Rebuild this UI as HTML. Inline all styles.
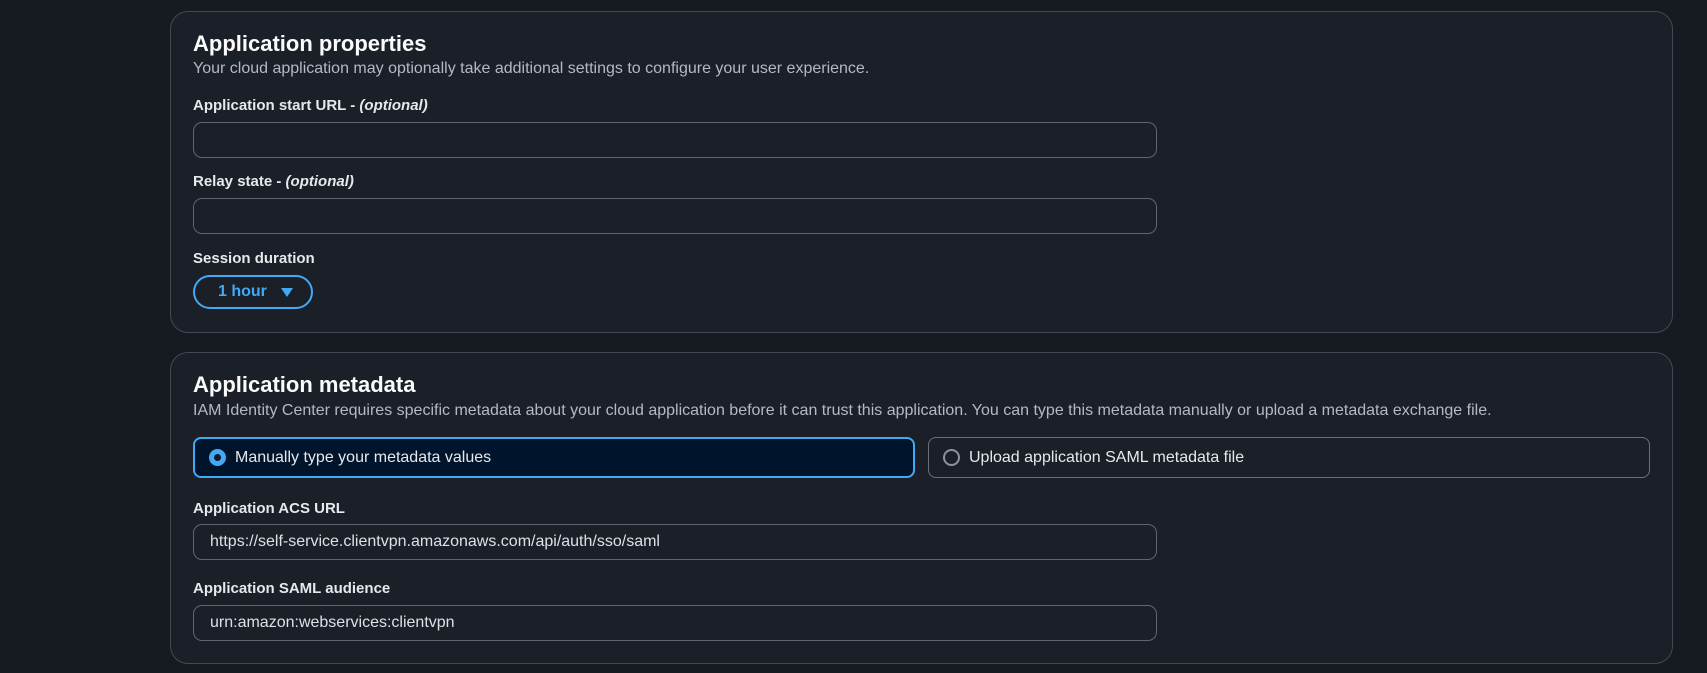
<!DOCTYPE html>
<html><head><meta charset="utf-8"><style>
*{box-sizing:border-box;margin:0;padding:0}
body{width:1707px;height:673px;background:#161a21;font-family:"Liberation Sans",sans-serif;position:relative;overflow:hidden;color:#d1d5db}
.card{position:absolute;left:170px;width:1503px;background:#1a1f28;border:1px solid #434954;border-radius:18px}
.a{position:absolute}
.h{font-size:22px;font-weight:bold;color:#fbfbfb;left:193px}
.sub{font-size:16px;color:#b4b9c2;left:193px}
.lbl{font-size:15px;font-weight:bold;color:#e6e8ec;left:193px}
.lbl i{font-weight:bold}
.inp{left:193px;width:964px;height:36px;border:1px solid #5f6672;border-radius:9px;background:#1a1f28;font-size:16px;color:#dde0e5;padding:8px 16px;line-height:18px}
</style></head><body>
<div class="card" style="top:11px;height:322px"></div>
<div class="card" style="top:352px;height:312px"></div>

<div class="a h" style="top:31px">Application properties</div>
<div class="a sub" style="top:60px">Your cloud application may optionally take additional settings to configure your user experience.</div>
<div class="a lbl" style="top:97px">Application start URL - <i>(optional)</i></div>
<div class="a inp" style="top:122px"></div>
<div class="a lbl" style="top:173px">Relay state - <i>(optional)</i></div>
<div class="a inp" style="top:198px"></div>
<div class="a lbl" style="top:250px">Session duration</div>
<div class="a" style="left:193px;top:275px;width:120px;height:34px;border:2px solid #42a9f5;border-radius:17px;color:#42a9f5;font-weight:bold;font-size:16px;padding-left:23px;line-height:30px">1 hour
<svg width="12" height="10" style="position:absolute;left:86px;top:11px"><path d="M0 0H12L6 9Z" fill="#42a9f5"/></svg></div>

<div class="a h" style="top:372px">Application metadata</div>
<div class="a sub" style="top:402px">IAM Identity Center requires specific metadata about your cloud application before it can trust this application. You can type this metadata manually or upload a metadata exchange file.</div>
<div class="a" style="left:193px;top:437px;width:722px;height:41px;border:2px solid #42a9f5;border-radius:8px;background:#00142b;font-size:16px;color:#e6e8ec;line-height:37px;padding-left:40px">Manually type your metadata values
<span style="position:absolute;left:14px;top:10px;width:17px;height:17px;border-radius:50%;border:5px solid #42a9f5;background:#0f1b2a"></span></div>
<div class="a" style="left:928px;top:437px;width:722px;height:41px;border:1px solid #6b717c;border-radius:8px;font-size:16px;color:#e6e8ec;line-height:39px;padding-left:40px">Upload application SAML metadata file
<span style="position:absolute;left:14px;top:11px;width:17px;height:17px;border-radius:50%;border:2px solid #8d939c"></span></div>

<div class="a lbl" style="top:500px">Application ACS URL</div>
<div class="a inp" style="top:524px">https://self-service.clientvpn.amazonaws.com/api/auth/sso/saml</div>
<div class="a lbl" style="top:580px">Application SAML audience</div>
<div class="a inp" style="top:605px">urn:amazon:webservices:clientvpn</div>
</body></html>
